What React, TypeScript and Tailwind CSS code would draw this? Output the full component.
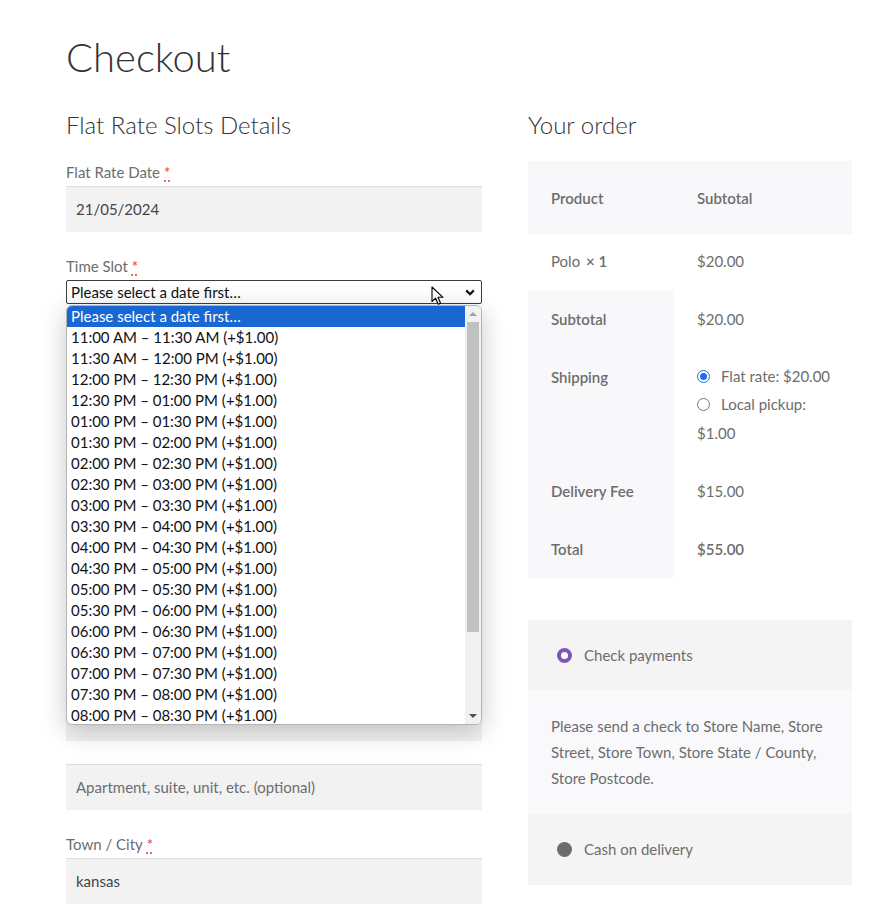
import { ReactNode } from "react";

const SLOTS = [
  "11:00 AM – 11:30 AM",
  "11:30 AM – 12:00 PM",
  "12:00 PM – 12:30 PM",
  "12:30 PM – 01:00 PM",
  "01:00 PM – 01:30 PM",
  "01:30 PM – 02:00 PM",
  "02:00 PM – 02:30 PM",
  "02:30 PM – 03:00 PM",
  "03:00 PM – 03:30 PM",
  "03:30 PM – 04:00 PM",
  "04:00 PM – 04:30 PM",
  "04:30 PM – 05:00 PM",
  "05:00 PM – 05:30 PM",
  "05:30 PM – 06:00 PM",
  "06:00 PM – 06:30 PM",
  "06:30 PM – 07:00 PM",
  "07:00 PM – 07:30 PM",
  "07:30 PM – 08:00 PM",
  "08:00 PM – 08:30 PM",
];

function Required() {
  return (
    <abbr className="ml-[4px] text-[#e2401c] underline decoration-dotted underline-offset-[3px]" title="required">
      *
    </abbr>
  );
}

function Label({ children }: { children: ReactNode }) {
  return (
    <label className="block text-[15px] leading-[24px] text-[#6d6d6d]">
      {children}
      <Required />
    </label>
  );
}

function TextInput({ value, placeholder }: { value?: string; placeholder?: string }) {
  return (
    <div className="mt-[2px] flex h-[46px] items-center border-t border-[#dcdcde] bg-[#f2f2f3] px-[10px] text-[15px]">
      {value ? <span className="text-[#43454b]">{value}</span> : <span className="text-[#6d6d6d]">{placeholder}</span>}
    </div>
  );
}

function Field({ label, value }: { label: string; value?: string }) {
  return (
    <div className="mb-[22px]">
      <Label>{label}</Label>
      <TextInput value={value} />
    </div>
  );
}

// billing fields hidden under the open dropdown, kept only for their height
function CoveredField() {
  return (
    <div className="mb-[22px]">
      <div className="h-[24px]" />
      <TextInput />
    </div>
  );
}

function Cursor() {
  return (
    <svg className="absolute left-[365px] top-[6px]" width="14" height="20" viewBox="0 0 14 20">
      <path d="M1 1 L1 15.5 L4.6 12.2 L7.2 18.3 L9.6 17.3 L7 11.3 L12 11.3 Z" fill="#fff" stroke="#000" strokeWidth="1.1" strokeLinejoin="round" />
    </svg>
  );
}

function SlotDropdown() {
  return (
    <div className="absolute left-0 top-[25px] z-10 flex h-[420px] w-[416px] overflow-hidden rounded-[6px] border border-[#b4b4b4] bg-white shadow-[0_6px_26px_rgba(0,0,0,0.22)]">
      <ul className="flex-1 text-[15px] leading-[21px] text-[#111]">
        <li className="bg-[#1967d2] pl-[4px] text-white">Please select a date first…</li>
        {SLOTS.map((slot) => (
          <li key={slot} className="pl-[4px]">
            {slot} (+$1.00)
          </li>
        ))}
      </ul>
      <div className="flex w-[16px] flex-col items-center bg-[#f1f1f1]">
        <div className="flex h-[16px] items-center justify-center">
          <div className="h-0 w-0 border-x-[4px] border-b-[4px] border-x-transparent border-b-[#a3a3a3]" />
        </div>
        <div className="h-[310px] w-[12px] bg-[#c1c1c1]" />
        <div className="flex-1" />
        <div className="flex h-[16px] items-center justify-center">
          <div className="h-0 w-0 border-x-[4px] border-t-[4px] border-x-transparent border-t-[#505050]" />
        </div>
      </div>
    </div>
  );
}

function TimeSlotField() {
  return (
    <div className="mb-[33px]">
      <Label>Time Slot</Label>
      <div className="relative mt-[2px]">
        <div className="flex h-[24px] items-center justify-between rounded-[2px] border border-[#3c3c3c] bg-white pl-[4px] pr-[6px] text-[15px] text-[#111]">
          <span>Please select a date first…</span>
          <svg width="10" height="7" viewBox="0 0 10 7">
            <path d="M1.2 1.4 L5 5.2 L8.8 1.4" fill="none" stroke="#111" strokeWidth="2.2" />
          </svg>
        </div>
        <Cursor />
        <SlotDropdown />
      </div>
    </div>
  );
}

function Radio({ checked }: { checked?: boolean }) {
  return checked ? (
    <span className="inline-flex h-[13px] w-[13px] shrink-0 items-center justify-center rounded-full border border-[#1a73e8]">
      <span className="h-[7px] w-[7px] rounded-full bg-[#1a73e8]" />
    </span>
  ) : (
    <span className="inline-block h-[13px] w-[13px] shrink-0 rounded-full border border-[#767676] bg-white" />
  );
}

function OrderTable() {
  const th = "w-[146px] bg-[#f8f8fa] px-[23px] text-left align-top font-semibold";
  return (
    <table className="w-full border-collapse text-[15px] leading-[24px] text-[#6d6d6d]">
      <thead>
        <tr className="bg-[#f8f8fa]">
          <th className="h-[73px] px-[23px] text-left font-semibold">Product</th>
          <th className="h-[73px] px-[23px] text-left font-semibold">Subtotal</th>
        </tr>
      </thead>
      <tbody>
        <tr>
          <td className="px-[23px] pb-[16px] pt-[15px] leading-[25px]">
            Polo <strong className="ml-[2px] font-semibold">× 1</strong>
          </td>
          <td className="px-[23px] pb-[16px] pt-[15px] leading-[25px]">$20.00</td>
        </tr>
      </tbody>
      <tfoot>
        <tr>
          <th className={`${th} py-[17px]`}>Subtotal</th>
          <td className="px-[23px] py-[17px]">$20.00</td>
        </tr>
        <tr>
          <th className={`${th} pt-[17px]`}>Shipping</th>
          <td className="pb-[15px] pl-[23px] pr-[10px] pt-[14px] align-top leading-[28px]">
            <ul>
              <li className="flex items-center gap-[11px]">
                <Radio checked />
                <span>Flat rate: $20.00</span>
              </li>
              <li>
                <span className="mr-[11px] inline-block align-[-1px]">
                  <Radio />
                </span>
                Local pickup:
                <br />
                $1.00
              </li>
            </ul>
          </td>
        </tr>
        <tr>
          <th className={`${th} py-[17px]`}>Delivery Fee</th>
          <td className="px-[23px] py-[17px]">$15.00</td>
        </tr>
        <tr>
          <th className={`${th} py-[17px]`}>Total</th>
          <td className="px-[23px] py-[17px] font-semibold">$55.00</td>
        </tr>
      </tfoot>
    </table>
  );
}

function Payments() {
  return (
    <div className="mt-[42px] text-[15px] text-[#6d6d6d]">
      <div className="flex h-[70px] items-center gap-[12px] bg-[#f4f4f5] px-[29px]">
        <span className="h-[15px] w-[15px] rounded-full border-[4px] border-[#7f54b3] bg-white" />
        <span>Check payments</span>
      </div>
      <div className="bg-[#f9f9fb] pb-[22px] pl-[23px] pr-[14px] pt-[23px] leading-[26px]">
        Please send a check to Store Name, Store Street, Store Town, Store State / County, Store Postcode.
      </div>
      <div className="flex h-[72px] items-center gap-[12px] bg-[#f4f4f5] px-[29px]">
        <span className="h-[15px] w-[15px] rounded-full bg-[#6d6d6d]" />
        <span>Cash on delivery</span>
      </div>
    </div>
  );
}

export default function App() {
  return (
    <div className="min-h-[912px] overflow-hidden bg-white pl-[66px] font-['Lato',sans-serif]">
      <h1 className="pt-[30px] text-[40px] font-light leading-[54px] text-[#333]">Checkout</h1>
      <div className="mt-[23px] grid grid-cols-[416px_324px] gap-x-[46px]">
        <div>
          <h3 className="mb-[17px] text-[24px] font-light leading-[36px] text-[#333]">Flat Rate Slots Details</h3>
          <Field label="Flat Rate Date" value="21/05/2024" />
          <TimeSlotField />
          <div className="mb-[14px] h-[36px]" />
          <CoveredField />
          <CoveredField />
          <CoveredField />
          <div className="mb-[23px]">
            <div className="h-[24px]" />
            <TextInput />
          </div>
          <div className="mb-[22px]">
            <TextInput placeholder="Apartment, suite, unit, etc. (optional)" />
          </div>
          <Field label="Town / City" value="kansas" />
        </div>
        <div>
          <h3 className="mb-[18px] text-[24px] font-light leading-[36px] text-[#333]">Your order</h3>
          <OrderTable />
          <Payments />
        </div>
      </div>
    </div>
  );
}
